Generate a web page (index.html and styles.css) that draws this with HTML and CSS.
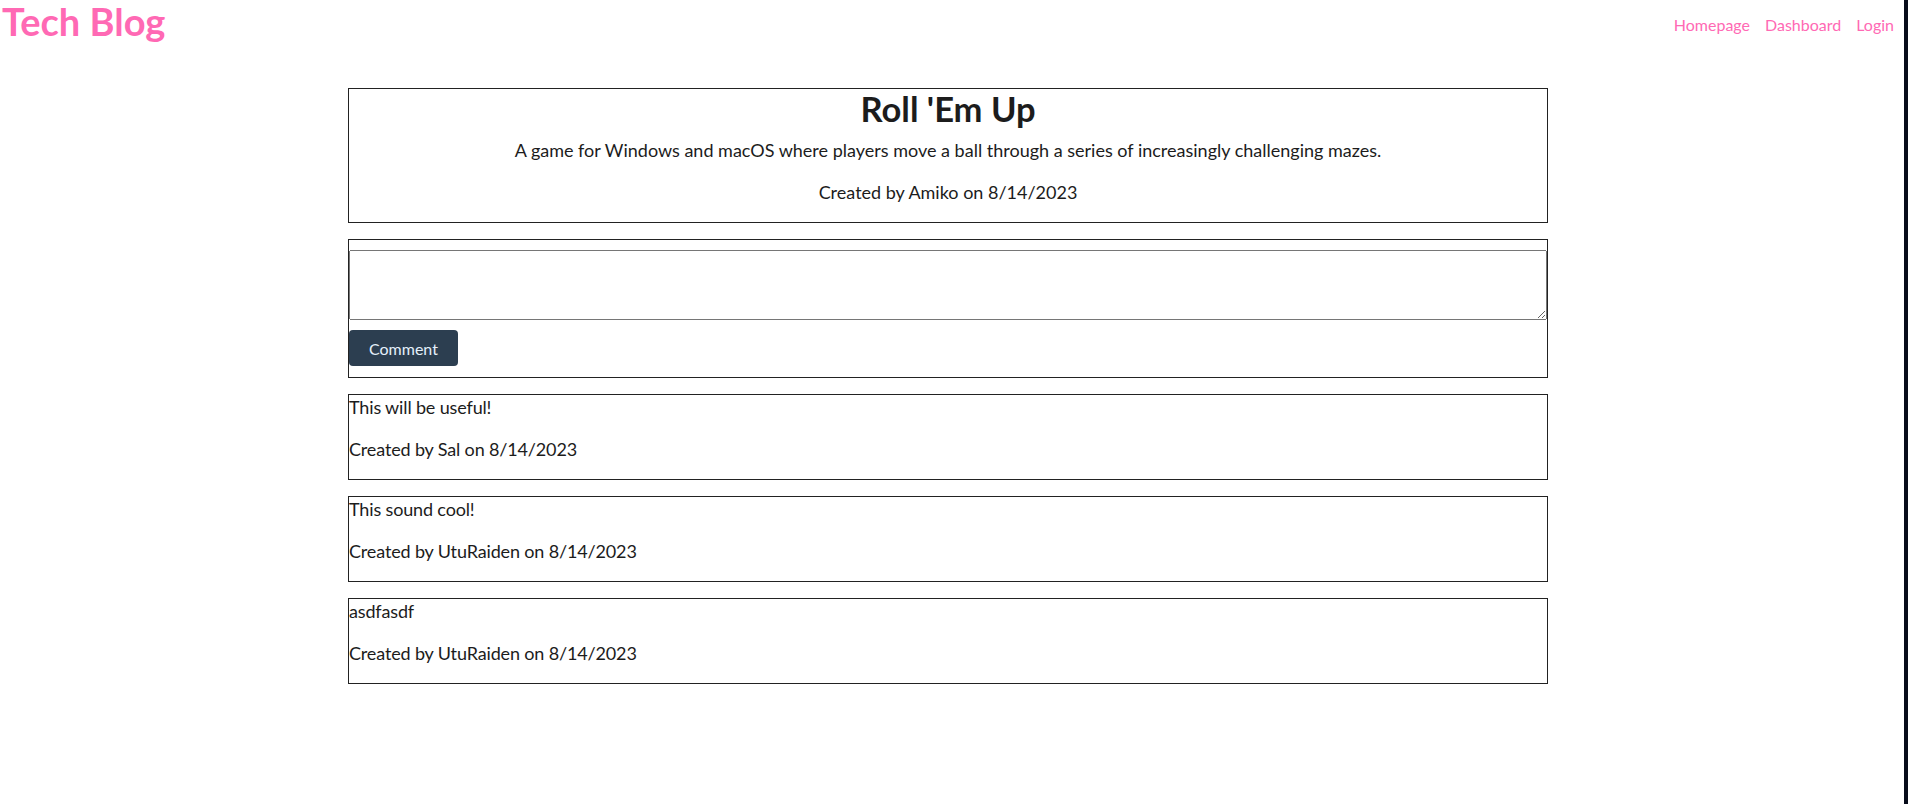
FILE: index.html
```html
<!DOCTYPE html>
<html lang="en">
<head>
<meta charset="utf-8">
<title>Tech Blog</title>
<link rel="stylesheet" href="styles.css">
</head>
<body>
<div class="site">
  <header class="topbar">
    <h1 class="brand">Tech Blog</h1>
    <nav class="nav">
      <a href="#" class="nav-link">Homepage</a>
      <a href="#" class="nav-link">Dashboard</a>
      <a href="#" class="nav-link">Login</a>
    </nav>
  </header>
  <main class="content">
    <section class="card post">
      <h2 class="post-title">Roll 'Em Up</h2>
      <p class="line">A game for Windows and macOS where players move a ball through a series of increasingly challenging mazes.</p>
      <p class="line">Created by Amiko on 8/14/2023</p>
    </section>
    <form class="card comment-form">
      <textarea class="comment-input" aria-label="Comment"></textarea>
      <button type="button" class="btn">Comment</button>
    </form>
    <section class="card comment">
      <p class="line">This will be useful!</p>
      <p class="line">Created by Sal on 8/14/2023</p>
    </section>
    <section class="card comment">
      <p class="line">This sound cool!</p>
      <p class="line">Created by UtuRaiden on 8/14/2023</p>
    </section>
    <section class="card comment">
      <p class="line">asdfasdf</p>
      <p class="line">Created by UtuRaiden on 8/14/2023</p>
    </section>
  </main>
</div>
<div class="edge"></div>
</body>
</html>
```

FILE: styles.css
```css
html, body {
  margin: 0;
  padding: 0;
  background: #ffffff;
}

body {
  display: flex;
  min-height: 100vh;
  font-family: "Lato", "Open Sans", sans-serif;
  color: #1c1c1c;
}

.site {
  flex: 1;
  min-width: 0;
}

.edge {
  width: 4px;
  flex: none;
  background: #070c1a;
}

.topbar {
  display: flex;
  justify-content: space-between;
  align-items: flex-start;
  height: 42px;
  padding: 0 10px 0 2px;
}

.brand {
  margin: 0;
  font-size: 38px;
  line-height: 42px;
  font-weight: 700;
  color: #ff69b4;
}

.nav {
  display: flex;
  gap: 15px;
  padding-top: 8px;
}

.nav-link {
  font-size: 16px;
  line-height: 33px;
  color: #ff69b4;
  text-decoration: none;
}

.content {
  display: flex;
  flex-direction: column;
  align-items: center;
  gap: 16px;
  margin-top: 46px;
  padding-right: 8px;
}

.card {
  box-sizing: border-box;
  width: 1200px;
  border: 1px solid #222;
  font-size: 18px;
}

.line {
  margin: 0 0 18px;
  line-height: 24px;
}

.comment .line {
  letter-spacing: -0.15px;
}

.post {
  text-align: center;
}

.post-title {
  margin: 0 0 10px;
  font-size: 34.5px;
  line-height: 39px;
  font-weight: 700;
}

.comment-form {
  display: flex;
  flex-direction: column;
  align-items: flex-start;
  gap: 10px;
  padding: 10px 0 11px;
  margin: 0;
}

.comment-input {
  display: block;
  box-sizing: border-box;
  width: 100%;
  height: 70px;
  margin: 0;
}

.btn {
  height: 36px;
  padding: 0 20px;
  border: none;
  border-radius: 4px;
  background: #2c3e50;
  color: #e4f0fb;
  font-family: "Lato", "Open Sans", sans-serif;
  font-size: 16px;
}
```
